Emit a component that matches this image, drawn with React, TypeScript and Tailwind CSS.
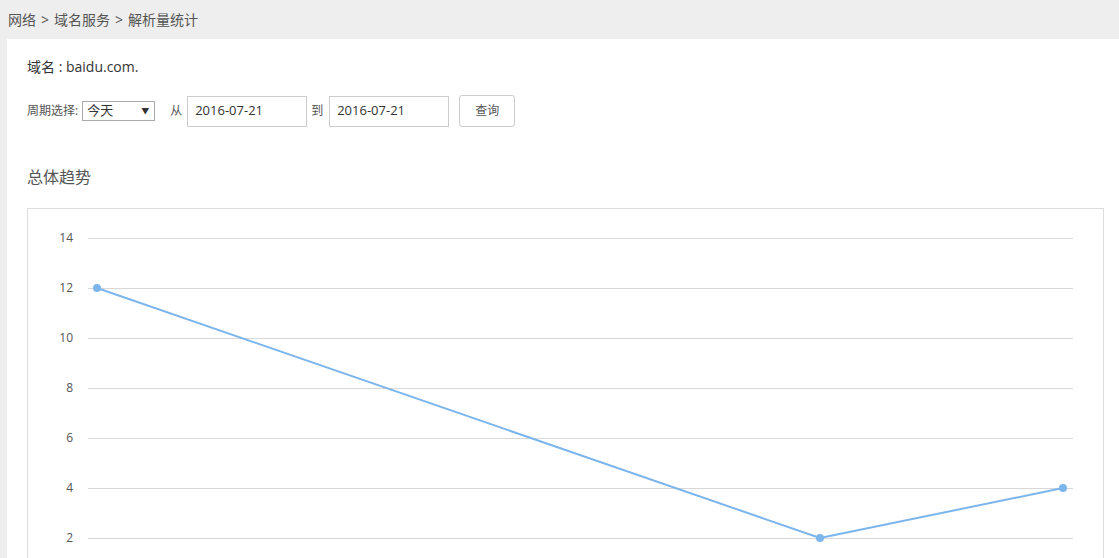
import React from "react";

const FONT = { fontFamily: '"Open Sans", "Noto Sans CJK SC", sans-serif' };

const ticks = [14, 12, 10, 8, 6, 4, 2];
const yOf = (v: number) => 29 + (14 - v) * 25;
const points: [number, number][] = [
  [69, yOf(12)],
  [792, yOf(2)],
  [1035, yOf(4)],
];

function TrendChart() {
  return (
    <svg width="1074" height="360" className="block">
      {ticks.map((t) => (
        <g key={t}>
          <line x1="60" x2="1045" y1={yOf(t) + 0.5} y2={yOf(t) + 0.5} stroke="#d8d8d8" strokeWidth="1" />
          <text x="45" y={yOf(t) + 4} textAnchor="end" fontSize="12" fill="#555" style={FONT}>
            {t}
          </text>
        </g>
      ))}
      <polyline
        points={points.map((p) => p.join(",")).join(" ")}
        fill="none"
        stroke="#7cb5ec"
        strokeWidth="2"
        strokeLinejoin="round"
      />
      {points.map(([x, y]) => (
        <circle key={x} cx={x} cy={y} r="4" fill="#7cb5ec" />
      ))}
    </svg>
  );
}

export default function App() {
  return (
    <div className="h-[558px] overflow-hidden bg-[#eeeeee]" style={FONT}>
      <div className="flex h-[39px] items-center pl-2 text-[14px] text-[#555]">
        <span>网络</span>
        <span className="mx-[5px]">&gt;</span>
        <span>域名服务</span>
        <span className="mx-[5px]">&gt;</span>
        <span>解析量统计</span>
      </div>
      <div className="ml-[7px] min-h-[519px] bg-white pl-5 pt-[18px]">
        <div className="text-[14px] leading-5 text-[#333]">域名 : baidu.com.</div>

        <div className="mt-[18px] flex items-center text-[12px] text-[#555]">
          <span>周期选择:</span>
          <div className="ml-1 flex h-5 w-[73px] items-center justify-between border border-[#a9a9a9] pl-1 pr-[5px] text-[13px] text-[#333]">
            <span>今天</span>
            <span className="text-[8px]">▼</span>
          </div>
          <span className="ml-[15px]">从</span>
          <div className="ml-[5px] flex h-[31px] w-[120px] items-center border border-[#ccc] px-[7px] text-[13px] text-[#333]">
            2016-07-21
          </div>
          <span className="ml-1">到</span>
          <div className="ml-[6px] flex h-[31px] w-[120px] items-center border border-[#ccc] px-[7px] text-[13px] text-[#333]">
            2016-07-21
          </div>
          <button
            type="button"
            className="ml-[10px] h-8 w-14 rounded-[3px] border border-[#ccc] bg-white text-[12px] text-[#555]"
          >
            查询
          </button>
        </div>

        <div className="mt-[38px] text-[16px] leading-6 text-[#555]">总体趋势</div>

        <div className="mt-[19px] mr-[15px] h-[360px] border border-[#ddd] bg-white">
          <TrendChart />
        </div>
      </div>
    </div>
  );
}
